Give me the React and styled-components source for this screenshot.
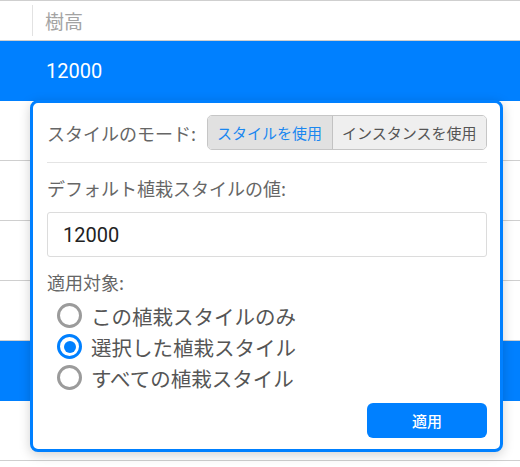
import React, { useState } from "react";
import styled, { createGlobalStyle } from "styled-components";

const Global = createGlobalStyle`
  html, body { margin: 0; padding: 0; background: #fff; }
  body { font-family: Roboto, "Noto Sans CJK JP", sans-serif; }
  * { box-sizing: border-box; }
`;

const Page = styled.div`
  position: relative;
  width: 520px;
  height: 467px;
  overflow: hidden;
`;

const Table = styled.div`
  display: flex;
  flex-direction: column;
  border-top: 1px solid #cfcfcf;
`;

const HeaderRow = styled.div`
  display: flex;
  align-items: center;
  height: 40px;
  border-bottom: 1px solid #cfcfcf;
`;

const LeadCell = styled.div`
  width: 33px;
  height: 31px;
  border-right: 1px solid #e2e2e2;
`;

const HeaderCell = styled.div`
  padding-left: 12px;
  font-family: "Noto Sans CJK JP", sans-serif;
  font-size: 19px;
  color: #a3a3a3;
`;

const Row = styled.div`
  display: flex;
  align-items: center;
  height: 60px;
  border-bottom: 1px solid ${(p) => (p.$selected ? "#0080ff" : "#cfcfcf")};
  background: ${(p) => (p.$selected ? "#0080ff" : "#fff")};
  color: ${(p) => (p.$selected ? "#fff" : "#333")};
  padding-left: 46px;
  font-size: 20px;
`;

const Popover = styled.div`
  position: absolute;
  left: 30px;
  top: 100px;
  width: 473px;
  height: 352px;
  background: #fff;
  border: 3px solid #0080ff;
  border-radius: 8px;
  box-shadow: 0 3px 12px rgba(0, 0, 0, 0.18);
  padding: 12px 13px 10px 14px;
  display: flex;
  flex-direction: column;
  font-family: "Noto Sans CJK JP", sans-serif;
`;

const ModeRow = styled.div`
  display: flex;
  align-items: center;
  justify-content: space-between;
  height: 35px;
`;

const Label = styled.div`
  font-size: 18px;
  line-height: 24px;
  color: #666;
`;

const Segmented = styled.div`
  display: flex;
  height: 35px;
  border: 1px solid #c6c6c6;
  border-radius: 5px;
  overflow: hidden;
`;

const SegButton = styled.button`
  border: none;
  margin: 0;
  padding: 0 9.5px;
  height: 100%;
  font-family: "Noto Sans CJK JP", sans-serif;
  font-size: 15px;
  background: ${(p) => (p.$active ? "#e1e1e1" : "#efefef")};
  color: ${(p) => (p.$active ? "#1a87f0" : "#555")};
  border-left: ${(p) => (p.$first ? "none" : "1px solid #c2c2c2")};
  cursor: pointer;
`;

const Divider = styled.div`
  height: 1px;
  background: #e4e4e4;
  margin: 12px 0 13px;
`;

const ValueInput = styled.input`
  margin-top: 12px;
  height: 45px;
  border: 1px solid #dcdcdc;
  border-radius: 3px;
  padding: 0 15px;
  font-family: Roboto, sans-serif;
  font-size: 20px;
  color: #222;
  outline: none;
`;

const TargetLabel = styled(Label)`
  margin-top: 13px;
`;

const RadioList = styled.div`
  display: flex;
  flex-direction: column;
  margin-top: 6px;
  padding-left: 10px;
`;

const RadioRow = styled.label`
  display: flex;
  align-items: center;
  gap: 9px;
  height: 31px;
  font-size: 20.5px;
  color: #555;
  cursor: pointer;
`;

const RadioCircle = styled.span`
  width: 25px;
  height: 25px;
  border-radius: 50%;
  border: 3px solid ${(p) => (p.$checked ? "#0080ff" : "#9b9b9b")};
  display: flex;
  align-items: center;
  justify-content: center;
  flex-shrink: 0;
  &::after {
    content: "";
    width: 12px;
    height: 12px;
    border-radius: 50%;
    background: ${(p) => (p.$checked ? "#0080ff" : "transparent")};
  }
`;

const Footer = styled.div`
  display: flex;
  justify-content: flex-end;
  margin-top: 10px;
`;

const ApplyButton = styled.button`
  width: 120px;
  height: 35px;
  border: none;
  border-radius: 6px;
  background: #0080ff;
  color: #fff;
  font-family: "Noto Sans CJK JP", sans-serif;
  font-size: 15px;
  font-weight: 500;
  cursor: pointer;
`;

const options = ["この植栽スタイルのみ", "選択した植栽スタイル", "すべての植栽スタイル"];

export default function App() {
  const [mode, setMode] = useState(0);
  const [target, setTarget] = useState(1);
  return (
    <Page>
      <Global />
      <Table>
        <HeaderRow>
          <LeadCell />
          <HeaderCell>樹高</HeaderCell>
        </HeaderRow>
        <Row $selected>12000</Row>
        <Row />
        <Row />
        <Row />
        <Row />
        <Row $selected />
        <Row />
      </Table>
      <Popover>
        <ModeRow>
          <Label>スタイルのモード:</Label>
          <Segmented>
            <SegButton $first $active={mode === 0} onClick={() => setMode(0)}>
              スタイルを使用
            </SegButton>
            <SegButton $active={mode === 1} onClick={() => setMode(1)}>
              インスタンスを使用
            </SegButton>
          </Segmented>
        </ModeRow>
        <Divider />
        <Label>デフォルト植栽スタイルの値:</Label>
        <ValueInput defaultValue="12000" />
        <TargetLabel>適用対象:</TargetLabel>
        <RadioList>
          {options.map((o, i) => (
            <RadioRow key={o} onClick={() => setTarget(i)}>
              <RadioCircle $checked={target === i} />
              {o}
            </RadioRow>
          ))}
        </RadioList>
        <Footer>
          <ApplyButton>適用</ApplyButton>
        </Footer>
      </Popover>
    </Page>
  );
}
